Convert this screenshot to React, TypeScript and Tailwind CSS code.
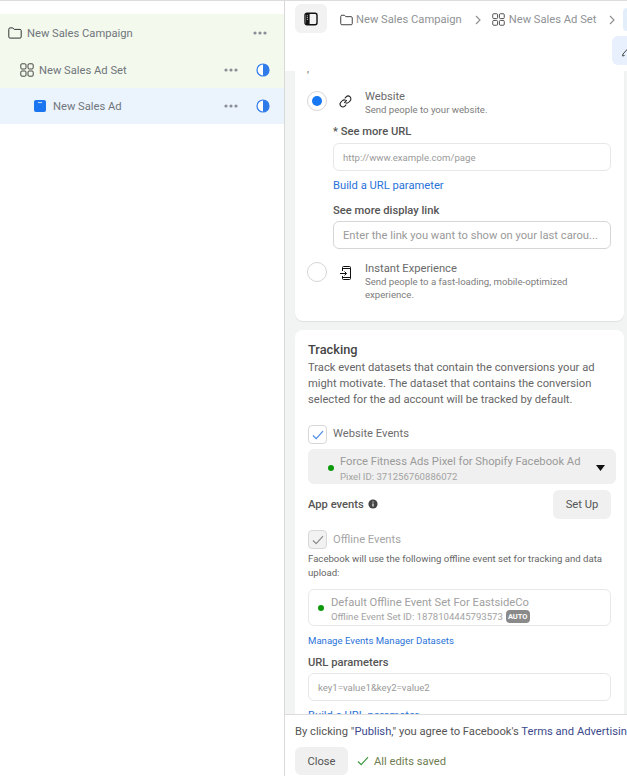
import React from 'react';

const FolderIcon = ({ className = '' }: { className?: string }) => (
  <svg viewBox="0 0 14 12" className={className} fill="none" stroke="currentColor" strokeWidth="1">
    <path d="M.8 2.2c0-.8.5-1.3 1.2-1.3h2.8l1.4 1.5h5.8c.8 0 1.2.5 1.2 1.2v6.3c0 .8-.5 1.2-1.2 1.2H2c-.7 0-1.2-.4-1.2-1.2V2.2z" />
  </svg>
);

const GridIcon = ({ className = '' }: { className?: string }) => (
  <svg viewBox="0 0 14 14" className={className} fill="none" stroke="currentColor" strokeWidth=".9">
    <rect x=".8" y=".8" width="5.2" height="5.2" rx="1.1" />
    <rect x="8" y=".8" width="5.2" height="5.2" rx="1.1" />
    <rect x=".8" y="8" width="5.2" height="5.2" rx="1.1" />
    <rect x="8" y="8" width="5.2" height="5.2" rx="1.1" />
  </svg>
);

const Dots = () => (
  <svg viewBox="0 0 14 4" className="h-1 w-3.5 text-[#8a8f96]" fill="currentColor">
    <circle cx="2" cy="2" r="1.6" />
    <circle cx="7" cy="2" r="1.6" />
    <circle cx="12" cy="2" r="1.6" />
  </svg>
);

const HalfCircle = () => (
  <svg viewBox="0 0 14 14" className="h-3.5 w-3.5 text-[#2f7bea]">
    <circle cx="7" cy="7" r="6" fill="#fff" stroke="currentColor" strokeWidth="1.2" />
    <path d="M7 1a6 6 0 0 1 0 12z" fill="currentColor" />
  </svg>
);

const Chevron = () => (
  <svg viewBox="0 0 6 10" className="h-2.5 w-1.5 shrink-0 text-[#8d8d8d]" fill="none" stroke="currentColor" strokeWidth="1.1">
    <path d="M1 1l4 4-4 4" />
  </svg>
);

const Check = ({ className = '' }: { className?: string }) => (
  <svg viewBox="0 0 12 10" className={className} fill="none" stroke="currentColor" strokeWidth="1.2">
    <path d="M1 5.5l3.2 3.2L11 1.2" />
  </svg>
);

const TreeRow = ({
  indent,
  icon,
  label,
  bg,
  height,
  status = true,
}: {
  indent: string;
  icon: React.ReactNode;
  label: string;
  bg: string;
  height: string;
  status?: boolean;
}) => (
  <div className={`flex items-center ${indent} ${bg} ${height}`}>
    <div className="flex w-[19px] shrink-0 items-center">{icon}</div>
    <span className="flex-1 pt-[3px] text-[11.2px] text-[#70757c]">{label}</span>
    {status ? (
      <div className="flex items-center gap-[18px] pr-[14px]">
        <Dots />
        <HalfCircle />
      </div>
    ) : (
      <div className="pr-[17px]">
        <Dots />
      </div>
    )}
  </div>
);

const TextField = ({ placeholder, strong = false }: { placeholder: string; strong?: boolean }) => (
  <div
    className={`flex h-[28px] items-center rounded-md border bg-white px-[9px] pt-[2px] text-[#9a9a9a] ${
      strong ? 'border-[#d4d6d8] text-[11.2px]' : 'border-[#e6e7e8] text-[9.6px]'
    }`}
  >
    <span className="whitespace-nowrap">{placeholder}</span>
  </div>
);

const Radio = ({ on = false }: { on?: boolean }) => (
  <div className="flex h-5 w-5 shrink-0 items-center justify-center rounded-full border border-[#d6d6d6] bg-white">
    {on && <div className="h-2.5 w-2.5 rounded-full bg-[#1877f2]" />}
  </div>
);

export default function App() {
  return (
    <div className="flex h-[776px] w-[627px] overflow-hidden border-t border-[#dcdcdc] bg-white font-['Roboto',sans-serif]">
      {/* campaign tree */}
      <aside className="w-[285px] shrink-0 border-r border-[#d9d9d9] pt-[13px]">
        <TreeRow
          indent="pl-[8px]"
          height="h-[37px]"
          bg="bg-[#f3f9ec]"
          label="New Sales Campaign"
          status={false}
          icon={<FolderIcon className="h-3 w-3.5 text-[#333]" />}
        />
        <TreeRow
          indent="pl-[20px]"
          height="h-[37px]"
          bg="bg-[#f3f9ec]"
          label="New Sales Ad Set"
          icon={<GridIcon className="h-3.5 w-3.5 text-[#333]" />}
        />
        <TreeRow
          indent="pl-[34px]"
          height="h-[36px]"
          bg="bg-[#ebf3fd]"
          label="New Sales Ad"
          icon={
            <svg viewBox="0 0 12 12" className="h-3 w-3">
              <rect width="12" height="12" rx="2" fill="#1b74f0" />
              <path d="M4 2.6h4" stroke="#fff" strokeWidth=".8" />
            </svg>
          }
        />
      </aside>

      <main className="flex min-w-0 flex-1 flex-col">
        {/* breadcrumb header */}
        <header className="relative h-[70px] shrink-0 overflow-hidden bg-white">
          <div className="flex items-center whitespace-nowrap pl-2.5 pt-[3px]">
            <div className="flex h-[29px] w-8 shrink-0 items-center justify-center rounded-md bg-[#f2f2f2]">
              <svg viewBox="0 0 14 14" className="h-3.5 w-3.5">
                <rect x="1" y="1.2" width="12" height="11.6" rx="2" fill="none" stroke="#111" strokeWidth="1.4" />
                <path d="M2 2h3.6v10H2z" fill="#111" />
                <path d="M2.8 3.8h1.2M2.8 5.6h1.2M2.8 7.4h1.2" stroke="#fff" strokeWidth=".7" />
              </svg>
            </div>
            <FolderIcon className="ml-[13px] mt-[2px] h-3 w-[13px] shrink-0 text-[#333]" />
            <span className="ml-[3px] pt-[3px] text-[11.2px] text-[#8f9296]">New Sales Campaign</span>
            <div className="ml-[13px] mt-[2px]">
              <Chevron />
            </div>
            <GridIcon className="ml-[11px] mt-[2px] h-[13px] w-[13px] shrink-0 text-[#333]" />
            <span className="ml-[4px] pt-[3px] text-[11.2px] text-[#8f9296]">New Sales Ad Set</span>
            <div className="ml-[13px] mt-[2px]">
              <Chevron />
            </div>
            <div className="ml-[8px] mt-[2px] h-[23px] w-4 shrink-0 rounded-l-sm bg-[#e3eefb]" />
          </div>
          <div className="absolute right-0 top-[35px] flex h-[29px] w-[15px] items-center rounded-l-md bg-[#e7f0fc] pl-[10px]">
            <svg viewBox="0 0 6 12" className="h-3 w-1.5 shrink-0" fill="none" stroke="#444" strokeWidth="1">
              <path d="M6 3.5L1 9 .6 11l2-.5" />
            </svg>
          </div>
        </header>

        {/* scrolled editor */}
        <div className="min-h-0 flex-1 overflow-hidden bg-[#f2f4f3] pl-2.5">
          <div className="flex w-[329px] flex-col gap-[9px]">
            <section className="-mt-[6px] h-[256px] rounded-b-lg bg-white pl-3 pr-[13px] shadow-[0_1px_1px_rgba(0,0,0,0.08)]">
              <div className="h-[26px] text-[10px] leading-[8px] text-[#666]">,</div>

              <div className="flex items-start">
                <Radio on />
                <svg viewBox="0 0 16 16" className="ml-[11px] mt-[3px] h-[15px] w-[15px] shrink-0" fill="none" stroke="#222" strokeWidth="1.1">
                  <path d="M6.6 9.4l2.8-2.8" />
                  <path d="M7.2 4.6l1.5-1.5a2.9 2.9 0 0 1 4.2 4.2l-1.5 1.5a2.9 2.9 0 0 1-3.6.4" />
                  <path d="M8.8 11.4l-1.5 1.5a2.9 2.9 0 0 1-4.2-4.2l1.5-1.5a2.9 2.9 0 0 1 3.6-.4" />
                </svg>
                <div className="ml-[12px] -mt-px">
                  <div className="text-[11.2px] leading-[13px] text-[#6a6a6a]">Website</div>
                  <div className="text-[9.6px] leading-[13px] text-[#7d7d7d]">Send people to your website.</div>
                </div>
              </div>

              <div className="ml-[26px] mt-[9px]">
                <div className="text-[11.2px] font-medium leading-[14px] text-[#555]">* See more URL</div>
                <div className="mt-[4px]">
                  <TextField placeholder="http://www.example.com/page" />
                </div>
                <div className="mt-[8px] text-[11.2px] leading-[14px] text-[#2a73d9]">Build a URL parameter</div>
                <div className="mt-[11px] text-[11.2px] font-medium leading-[14px] text-[#555]">See more display link</div>
                <div className="mt-[3px]">
                  <TextField strong placeholder="Enter the link you want to show on your last carou..." />
                </div>
              </div>

              <div className="mt-[13px] flex items-start">
                <Radio />
                <svg viewBox="0 0 14 14" className="ml-[13px] mt-[4px] h-3.5 w-3.5 shrink-0" fill="none" stroke="#111" strokeWidth="1">
                  <path d="M2.5 5V1.5a1 1 0 0 1 1-1h6a1 1 0 0 1 1 1v11a1 1 0 0 1-1 1h-6a1 1 0 0 1-1-1V10" />
                  <path d="M2.5 2.5h8M2.5 11.5h8M0 7.5h6.5M4.5 5.5l2 2-2 2" />
                </svg>
                <div className="ml-[11px]">
                  <div className="text-[11.2px] leading-[13px] text-[#6a6a6a]">Instant Experience</div>
                  <div className="w-[225px] text-[9.6px] leading-[13px] text-[#7d7d7d]">
                    Send people to a fast-loading, mobile-optimized experience.
                  </div>
                </div>
              </div>
            </section>

            <section className="rounded-t-lg bg-white pl-[13px] pr-[13px] pt-[12px]">
              <h2 className="text-[12.8px] font-medium leading-[16px] text-[#444]">Tracking</h2>
              <p className="mt-[2px] text-[11.2px] leading-4 text-[#666]">
                Track event datasets that contain the conversions your ad might motivate. The dataset that contains the conversion selected for the ad account will be tracked by default.
              </p>

              <div className="mt-[17px] flex items-center gap-[6px]">
                <div className="flex h-[19px] w-[19px] shrink-0 items-center justify-center rounded border border-[#d8d8d8]">
                  <Check className="h-2.5 w-3 text-[#4a8be8]" />
                </div>
                <span className="text-[11.2px] text-[#6d6d6d]">Website Events</span>
              </div>

              <div className="-mr-[5px] mt-[5px] flex h-[35px] items-center overflow-hidden rounded-md bg-[#f0f0f0] pl-[20px] pr-[11px]">
                <span className="mt-[3px] h-1.5 w-1.5 shrink-0 rounded-full bg-[#0c9a0c]" />
                <div className="ml-[6px] mt-[5px] flex-1 overflow-hidden whitespace-nowrap">
                  <div className="text-[11.2px] leading-4 text-[#9a9a9a]">Force Fitness Ads Pixel for Shopify Facebook Ad</div>
                  <div className="text-[9.6px] leading-[14px] text-[#a3a3a3]">Pixel ID: 371256760886072</div>
                </div>
                <svg viewBox="0 0 9 6" className="mt-[3px] h-1.5 w-[9px] shrink-0">
                  <path d="M0 0h9L4.5 6z" fill="#111" />
                </svg>
              </div>

              <div className="mt-[6px] flex items-center justify-between">
                <div className="flex items-center gap-1">
                  <span className="pt-[2px] text-[11.2px] font-medium text-[#555]">App events</span>
                  <svg viewBox="0 0 10 10" className="h-2.5 w-2.5">
                    <circle cx="5" cy="5" r="4.6" fill="#444" />
                    <path d="M5 4.4v3M5 2.4v1" stroke="#fff" strokeWidth="1.1" />
                  </svg>
                </div>
                <div className="flex h-[29px] w-[58px] items-center justify-center rounded-md bg-[#f0f0f0] pt-[2px] text-[11.2px] text-[#555]">
                  Set Up
                </div>
              </div>

              <div className="mt-[11px] flex items-center gap-[6px]">
                <div className="flex h-[19px] w-[19px] shrink-0 items-center justify-center rounded border border-[#d8d8d8] bg-[#f2f2f2]">
                  <Check className="h-2.5 w-3 text-[#8c8c8c]" />
                </div>
                <span className="pt-[2px] text-[11.2px] text-[#a5a5a5]">Offline Events</span>
              </div>

              <p className="mt-[3px] text-[9.6px] leading-[14px] text-[#666]">
                Facebook will use the following offline event set for tracking and data upload:
              </p>

              <div className="mt-[9px] flex h-[37px] items-center rounded-md border border-[#e8e8e8] pl-[9px]">
                <span className="h-1.5 w-1.5 shrink-0 rounded-full bg-[#0c9a0c]" />
                <div className="ml-[7px] mt-[3px]">
                  <div className="text-[11.2px] leading-[15px] text-[#a0a0a0]">Default Offline Event Set For EastsideCo</div>
                  <div className="flex items-center gap-[3px] text-[9.6px] leading-[14px] text-[#a3a3a3]">
                    Offline Event Set ID: 1878104445793573
                    <span className="rounded-sm bg-[#8a8a8a] px-[2px] text-[7.5px] font-bold leading-[13px] text-white">AUTO</span>
                  </div>
                </div>
              </div>

              <div className="mt-[8px] text-[9.6px] leading-[13px] text-[#2a73d9]">Manage Events Manager Datasets</div>
              <div className="mt-[9px] text-[11.2px] font-medium leading-[14px] text-[#555]">URL parameters</div>
              <div className="mt-[3px]">
                <TextField placeholder="key1=value1&key2=value2" />
              </div>
              <div className="mt-[8px] text-[11.2px] leading-[14px] text-[#2a73d9]">Build a URL parameter</div>
            </section>
          </div>
        </div>

        {/* publish footer */}
        <footer className="h-[62px] shrink-0 overflow-hidden whitespace-nowrap border-t border-[#dcdcdc] bg-white pl-2.5 pt-[10px]">
          <div className="text-[11.2px] leading-[14px] text-[#555]">
            By clicking "<span className="text-[#3b4a8c]">Publish</span>," you agree to Facebook's{' '}
            <span className="text-[#3b4a8c]">Terms and Advertising Guidelines</span>
          </div>
          <div className="mt-2 flex items-center">
            <div className="flex h-[28px] w-[53px] items-center justify-center rounded-md bg-[#f0f0f0] pt-[2px] text-[11.2px] text-[#555]">Close</div>
            <Check className="ml-[9px] h-2.5 w-3 text-[#3f9a3f]" />
            <span className="ml-[5px] pt-[2px] text-[11.2px] text-[#6f7d52]">All edits saved</span>
          </div>
        </footer>
      </main>
    </div>
  );
}
